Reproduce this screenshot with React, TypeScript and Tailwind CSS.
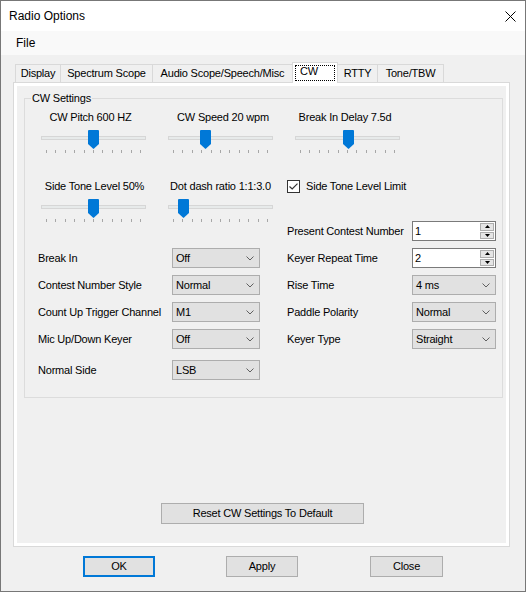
import type { ReactNode } from 'react';

const TICKS = Array.from({ length: 11 });

const tabs = [
  { name: 'Display', w: 'w-[46px]' },
  { name: 'Spectrum Scope', w: 'w-[93px]' },
  { name: 'Audio Scope/Speech/Misc', w: 'w-[141px]' },
  { name: 'CW', w: 'w-[46px]', active: true },
  { name: 'RTTY', w: 'w-[41px]' },
  { name: 'Tone/TBW', w: 'w-[67px]' },
];

function Slider({ label, thumb, labelClass = '' }: { label: string; thumb: number; labelClass?: string }) {
  return (
    <div className="w-[105px] shrink-0">
      <div className={`flex h-[13px] justify-center whitespace-nowrap leading-[13px] ${labelClass}`}>{label}</div>
      <div className="relative mt-[6px] h-[19px]">
        <div className="absolute inset-x-0 top-[6px] h-[4px] border border-[#d6d6d6] bg-[#e7eaea]" />
        <svg className="absolute top-0" style={{ left: thumb }} width="11" height="19" viewBox="0 0 11 19">
          <path d="M0 1 Q0 0 1 0 H10 Q11 0 11 1 V14 L5.5 19 L0 14 Z" fill="#0078d7" />
        </svg>
      </div>
      <div className="mt-px flex justify-between px-[5px]">
        {TICKS.map((_, i) => (
          <span key={i} className="h-[3px] w-px bg-[#a7a7a7]" />
        ))}
      </div>
    </div>
  );
}

function Combo({ value, w = 'w-[88px]' }: { value: string; w?: string }) {
  return (
    <div className={`flex h-[20px] shrink-0 items-center justify-between border border-[#adadad] bg-[#e1e1e1] pl-[3px] pr-[5px] ${w}`}>
      <span>{value}</span>
      <svg width="8" height="5" viewBox="0 0 8 5">
        <path d="M0.5 0.5 L4 4 L7.5 0.5" fill="none" stroke="#606060" />
      </svg>
    </div>
  );
}

function Spin({ value }: { value: string }) {
  return (
    <div className="flex h-[20px] w-[84px] shrink-0 border border-[#7a7a7a] bg-white">
      <span className="flex-1 pl-[2px] leading-[18px]">{value}</span>
      <div className="flex w-[16px] flex-col gap-px p-px">
        <div className="grid flex-1 place-items-center border border-[#adadad] bg-[#e5e5e5]">
          <svg width="5" height="3" viewBox="0 0 5 3"><path d="M0 3 L2.5 0 L5 3 Z" fill="#000" /></svg>
        </div>
        <div className="grid flex-1 place-items-center border border-[#adadad] bg-[#e5e5e5]">
          <svg width="5" height="3" viewBox="0 0 5 3"><path d="M0 0 L5 0 L2.5 3 Z" fill="#000" /></svg>
        </div>
      </div>
    </div>
  );
}

function Row({ left, right, className = '' }: { left?: [string, ReactNode]; right?: [string, ReactNode]; className?: string }) {
  return (
    <div className={`flex h-[20px] items-center ${className}`}>
      <div className="flex w-[222px] items-center">
        {left && (
          <>
            <span className="w-[134px] whitespace-nowrap">{left[0]}</span>
            {left[1]}
          </>
        )}
      </div>
      {right && (
        <div className="ml-[27px] flex items-center">
          <span className="w-[125px] whitespace-nowrap">{right[0]}</span>
          {right[1]}
        </div>
      )}
    </div>
  );
}

function Button({ children, focused = false, className = '' }: { children: ReactNode; focused?: boolean; className?: string }) {
  return (
    <button
      type="button"
      className={`flex h-[21px] items-center justify-center bg-[#e1e1e1] ${focused ? 'border-2 border-[#0078d7]' : 'border border-[#adadad]'} ${className}`}
    >
      {children}
    </button>
  );
}

export default function App() {
  return (
    <div className="flex h-[592px] w-[526px] flex-col border border-[#777777] bg-[#f0f0f0] font-['Liberation_Sans',Arial,sans-serif] text-[11px] tracking-[-0.2px] text-black">
      <div className="flex h-[30px] shrink-0 items-center justify-between bg-white pl-[8px] pr-[9px] text-[12px] tracking-normal">
        <span>Radio Options</span>
        <svg width="11" height="11" viewBox="0 0 11 11">
          <path d="M0.5 0.5 L10.5 10.5 M10.5 0.5 L0.5 10.5" stroke="#000" strokeWidth="1" />
        </svg>
      </div>

      <div className="flex h-[24px] shrink-0 items-center bg-[#f9f9f9] pl-[15px] text-[12px] tracking-normal">File</div>

      <div className="ml-[14px] mt-[7px] flex h-[20px] items-end">
        {tabs.map((tab, i) =>
          tab.active ? (
            <div key={tab.name} className={`relative z-10 -mb-px -ml-px h-[21px] border border-b-0 border-[#d9d9d9] bg-white pl-[2px] pt-[2px] ${tab.w}`}>
              <span className="block h-[16px] w-[40px] border border-dotted border-black pl-[4px] leading-[10px]">{tab.name}</span>
            </div>
          ) : (
            <div key={tab.name} className={`flex h-[18px] items-center justify-center border border-b-0 border-[#d9d9d9] bg-[#f0f0f0] ${i > 0 ? '-ml-px' : ''} ${tab.w}`}>
              {tab.name}
            </div>
          ),
        )}
      </div>

      <div className="ml-[12px] h-[465px] w-[497px] border border-[#d9d9d9] bg-white p-[3px]">
        <div className="flex h-full flex-col bg-[#f0f0f0]">
          <fieldset className="ml-[7px] mt-[6px] w-[479px] border border-[#dcdcdc] pb-[17px]">
            <legend className="ml-[6px] px-px leading-[13px]">CW Settings</legend>

            <div className="mt-[6px] flex gap-[22px] pl-[16px]">
              <Slider label="CW Pitch 600 HZ" thumb={47} labelClass="pr-[6px]" />
              <Slider label="CW Speed 20 wpm" thumb={32} labelClass="pl-[5px]" />
              <Slider label="Break In Delay 7.5d" thumb={48} labelClass="pr-[5px]" />
            </div>

            <div className="mt-[27px] flex items-start gap-[22px] pl-[16px]">
              <Slider label="Side Tone Level 50%" thumb={47} labelClass="pl-[2px]" />
              <Slider label="Dot dash ratio 1:1:3.0" thumb={10} />
              <label className="-ml-[8px] flex h-[13px] items-center gap-[6px] whitespace-nowrap">
                <span className="grid h-[13px] w-[13px] place-items-center border border-[#333333] bg-white">
                  <svg width="9" height="7" viewBox="0 0 9 7">
                    <path d="M0.5 3.5 L3.2 6 L8.5 0.6" fill="none" stroke="#333333" strokeWidth="1.2" />
                  </svg>
                </span>
                Side Tone Level Limit
              </label>
            </div>

            <div className="-mt-px flex flex-col gap-[7px] pl-[13px]">
              <Row right={['Present Contest Number', <Spin value="1" />]} />
              <Row left={['Break In', <Combo value="Off" />]} right={['Keyer Repeat Time', <Spin value="2" />]} />
              <Row left={['Contest Number Style', <Combo value="Normal" />]} right={['Rise Time', <Combo value="4 ms" w="w-[84px]" />]} />
              <Row left={['Count Up Trigger Channel', <Combo value="M1" />]} right={['Paddle Polarity', <Combo value="Normal" w="w-[84px]" />]} />
              <Row left={['Mic Up/Down Keyer', <Combo value="Off" />]} right={['Keyer Type', <Combo value="Straight" w="w-[84px]" />]} />
              <Row className="mt-[4px]" left={['Normal Side', <Combo value="LSB" />]} />
            </div>
          </fieldset>

          <Button className="mb-[19px] ml-[144px] mt-auto w-[203px]">Reset CW Settings To Default</Button>
        </div>
      </div>

      <div className="ml-[82px] mt-[9px] flex">
        <Button focused className="w-[72px]">OK</Button>
        <Button className="ml-[71px] w-[72px]">Apply</Button>
        <Button className="ml-[72px] w-[73px]">Close</Button>
      </div>
    </div>
  );
}
